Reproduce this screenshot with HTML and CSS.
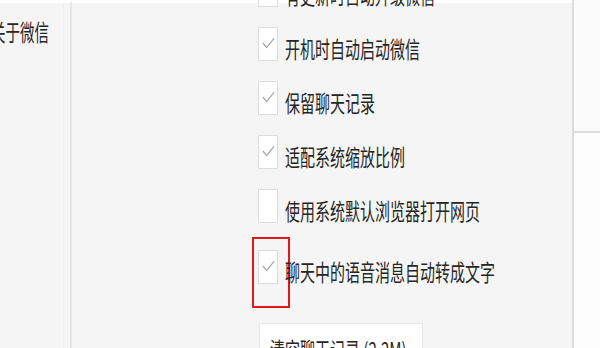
FILE: index.html
```html
<!DOCTYPE html>
<html lang="zh-CN">
<head>
    <meta charset="UTF-8">
    <title>设置</title>
    <link rel="stylesheet" href="styles.css">
</head>
<body>

<div class="window">
    <div class="sidebar">
        <div class="nav-item">关于微信</div>
    </div>

    <div class="content">
        <div class="option-list">
            <div class="option">
                <span class="checkbox checked"><svg viewBox="0 0 14 12"><polyline points="1,6 5,11 13,1"/></svg></span>
                <span class="label">有更新时自动升级微信</span>
            </div>
            <div class="option">
                <span class="checkbox checked"><svg viewBox="0 0 14 12"><polyline points="1,6 5,11 13,1"/></svg></span>
                <span class="label">开机时自动启动微信</span>
            </div>
            <div class="option">
                <span class="checkbox checked"><svg viewBox="0 0 14 12"><polyline points="1,6 5,11 13,1"/></svg></span>
                <span class="label">保留聊天记录</span>
            </div>
            <div class="option">
                <span class="checkbox checked"><svg viewBox="0 0 14 12"><polyline points="1,6 5,11 13,1"/></svg></span>
                <span class="label">适配系统缩放比例</span>
            </div>
            <div class="option">
                <span class="checkbox"></span>
                <span class="label">使用系统默认浏览器打开网页</span>
            </div>
            <div class="option last">
                <span class="checkbox checked">
                    <svg viewBox="0 0 14 12"><polyline points="1,6 5,11 13,1"/></svg>
                    <span class="highlight"></span>
                </span>
                <span class="label">聊天中的语音消息自动转成文字</span>
            </div>
        </div>

        <button class="clear-btn"><span class="label">清空聊天记录 (2.2M)</span></button>
    </div>

    <div class="side-panel">
        <div class="panel-top"></div>
        <div class="panel-bottom"></div>
    </div>
</div>

</body>
</html>
```

FILE: styles.css
```css
body {
    margin: 0;
    background-color: #f5f5f5;
    font-family: "Noto Sans CJK SC", "Liberation Sans", sans-serif;
    color: #262626;
    overflow: hidden;
}

.window {
    display: flex;
    height: 348px;
}

.sidebar {
    width: 70px;
    border-top: 3px solid #fff;
    border-right: 2px solid #e6e6e6;
    background: linear-gradient(to right, #f5f5f5 63px, #eeeeee 63px, #eeeeee 64px, #f5f5f5 64px);
    flex-shrink: 0;
}

.nav-item {
    margin: 16px 0 0 -9px;
    font-size: 14.5px;
    line-height: 26px;
    white-space: nowrap;
    transform: scaleY(1.55);
}

.content {
    flex: 1;
    border-top: 3px solid #fff;
    padding-left: 186px;
}

.option-list {
    margin-top: -40px;
}

.option {
    display: flex;
    align-items: center;
    height: 54px;
}

.option.last {
    margin-top: 7px;
}

.checkbox {
    position: relative;
    width: 18px;
    height: 32px;
    border: 1px solid #dcdcdc;
    background-color: #fff;
    display: flex;
    align-items: center;
    justify-content: center;
    margin-right: 7px;
    flex-shrink: 0;
}

.checkbox svg {
    width: 13px;
    height: 12px;
    margin-top: -2px;
    fill: none;
    stroke: #a6a6a6;
    stroke-width: 1.3;
}

.label {
    display: inline-block;
    font-size: 15px;
    line-height: 20px;
    white-space: nowrap;
    margin-top: 10px;
    transform: scaleY(1.5);
}

.highlight {
    position: absolute;
    left: -7px;
    top: -14px;
    width: 34px;
    height: 67px;
    border: 2px solid #e3161b;
}

.clear-btn {
    display: block;
    margin: 29px 0 0 1px;
    width: 164px;
    height: 44px;
    padding: 10px 0 0 10px;
    text-align: left;
    background-color: #fff;
    border: 1px solid #e8e8e8;
    font-family: inherit;
    color: #262626;
}

.clear-btn .label {
    margin-top: 0;
}

.side-panel {
    width: 26px;
    border-left: 2px solid #dcdcdc;
    display: flex;
    flex-direction: column;
    flex-shrink: 0;
}

.panel-top {
    height: 131px;
    background-color: #fbfbfb;
    border-bottom: 2px solid #dddddd;
}

.panel-bottom {
    flex: 1;
    background-color: #fcfcfc;
}
```
